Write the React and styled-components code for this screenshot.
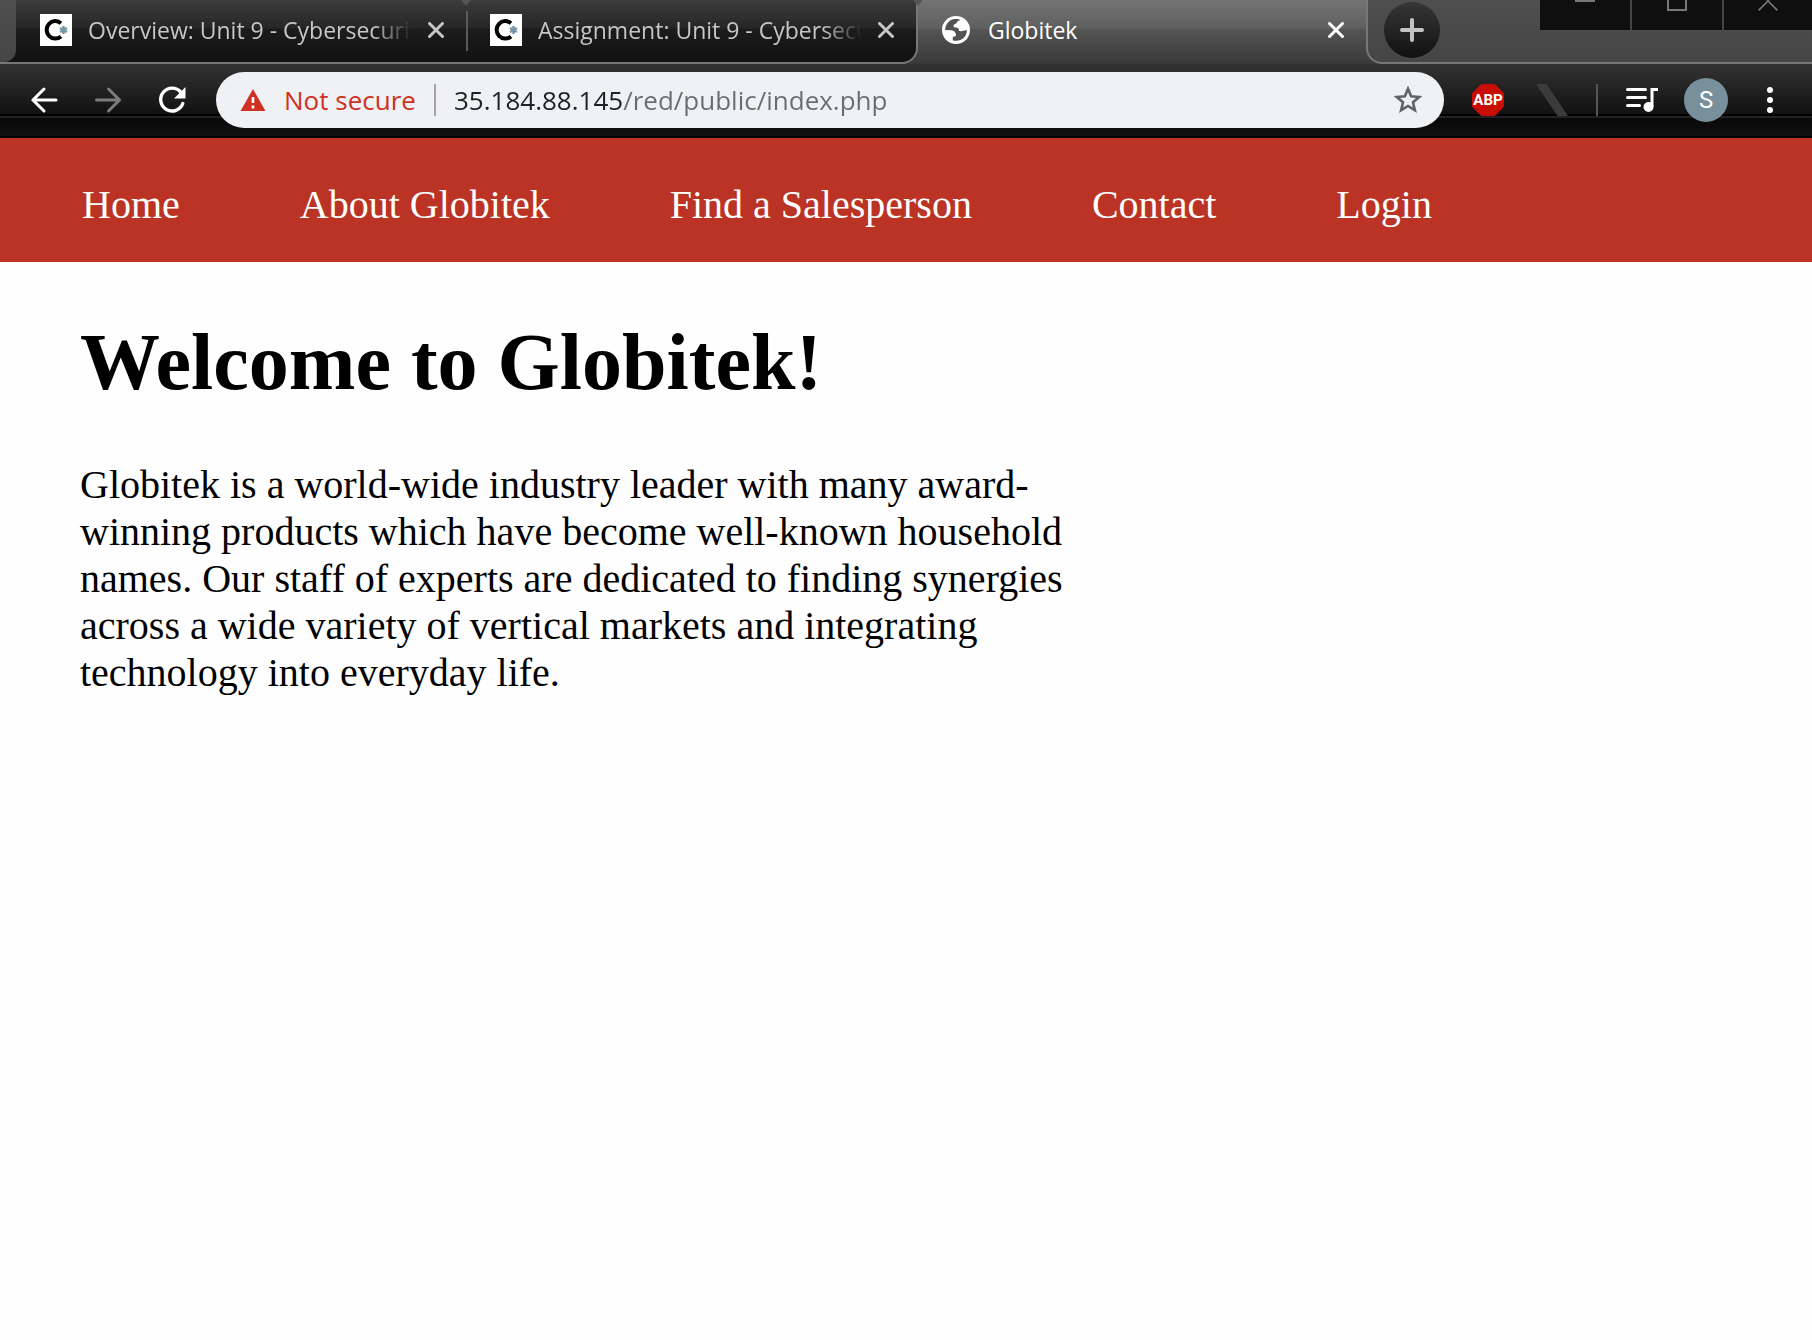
import React from "react";
import styled, { createGlobalStyle, css } from "styled-components";

const GlobalStyle = createGlobalStyle`
  *, *::before, *::after { box-sizing: border-box; }
  body { margin: 0; background: #fefefe; }
`;

const UI_FONT = `"Open Sans", "Noto Sans", sans-serif`;
const PAGE_FONT = `"Liberation Serif", "Times New Roman", serif`;
const LINE = "#777777";

const inactiveFill = "linear-gradient(#3c3c3c 0, #262626 28px, #1c1c1c 29px, #111111 62px)";
const frameFill = "linear-gradient(#4f4f4f, #454545)";

const IconButton = styled.button`
  display: flex;
  align-items: center;
  justify-content: center;
  flex: none;
  width: ${(p) => p.$size}px;
  height: ${(p) => p.$size}px;
  padding: 0;
  border: 0;
  background: none;
  color: ${(p) => p.$color || "#ffffff"};
`;

/* Tab strip */
const Strip = styled.div`
  display: flex;
  height: 64px;
  overflow: hidden;
  background: linear-gradient(#737373 0, #5e605f 28px, #545454 30px, #393939 64px);
  font-family: ${UI_FONT};
`;

const FrameEdge = styled.div`
  flex: none;
  width: 16px;
  background: ${frameFill};
  border-bottom-right-radius: 12px;
`;

const BackTabs = styled.div`
  display: flex;
  flex: 0 1 auto;
  min-width: 0;
  border: solid ${LINE};
  border-width: 0 2px 2px 0;
  border-bottom-right-radius: 16px;
  background: ${inactiveFill};
`;

const notch = css`
  &::before {
    content: "";
    position: absolute;
    top: 0;
    left: -5px;
    width: 10px;
    height: 6px;
    background: #555555;
    clip-path: polygon(0 0, 100% 0, 50% 100%);
  }
`;

const Tab = styled.div`
  position: relative;
  display: flex;
  align-items: center;
  flex: 0 1 450px;
  min-width: 0;
  height: 60px;
  padding: 0 18px 0 24px;
  color: ${(p) => (p.$active ? "#ffffff" : "#c4c7c5")};
  ${(p) => p.$notch && notch}
`;

const ActiveTab = styled(Tab)`
  flex-basis: 448px;
  padding-left: 22px;
`;

const TabDivider = styled.span`
  flex: none;
  align-self: center;
  width: 2px;
  height: 40px;
  margin-right: -2px;
  background: #5a5a5a;
`;

const TabTitle = styled.span`
  flex: 1;
  min-width: 0;
  margin: 0 12px 0 16px;
  overflow: hidden;
  white-space: nowrap;
  font-size: 23px;
  line-height: 32px;
  ${(p) => p.$fade && "mask-image: linear-gradient(to right, #000 calc(100% - 40px), transparent);"}
`;

const StripRest = styled.div`
  display: flex;
  flex: 1;
  align-items: flex-start;
  justify-content: space-between;
  border: solid ${LINE};
  border-width: 0 0 2px 2px;
  border-bottom-left-radius: 16px;
  background: ${frameFill};
`;

const NewTab = styled(IconButton)`
  margin: 2px 0 0 16px;
  border-radius: 50%;
  background: linear-gradient(#363636, #111111);
`;

const WindowControls = styled.div`
  display: flex;
  gap: 2px;
  height: 30px;
  background: #454545;
`;

const WindowButton = styled.button`
  display: flex;
  justify-content: center;
  align-items: flex-start;
  width: ${(p) => p.$width}px;
  padding: 0;
  border: 0;
  background: #0f0f0f;
  color: #777777;
`;

/* Toolbar */
const Toolbar = styled.div`
  display: flex;
  align-items: center;
  height: 74px;
  padding: 0 26px 0 28px;
  border-bottom: 2px solid #000000;
  background: linear-gradient(
    #333333 0, #111111 50px, #000000 50px, #000000 52px,
    #222222 52px, #222222 54px, #080808 54px, #111111 72px
  );
  font-family: ${UI_FONT};
`;

const NavButtons = styled.div`
  display: flex;
  gap: 32px;
  margin-right: 28px;
`;

const Omnibox = styled.form`
  display: flex;
  align-items: center;
  flex: 1;
  min-width: 0;
  height: 56px;
  margin: 0;
  padding: 0 20px 0 24px;
  border-radius: 28px;
  background: #f0f1f4;
`;

const Security = styled.button`
  display: flex;
  align-items: center;
  gap: 18px;
  flex: none;
  width: 194px;
  padding: 0;
  border: 0;
  background: none;
  color: #cf3222;
  font: 26px/36px ${UI_FONT};
  white-space: nowrap;
`;

const Divider = styled.span`
  flex: none;
  width: 2px;
  height: 32px;
  background: ${(p) => p.$color};
`;

const Address = styled.input`
  flex: 1;
  min-width: 0;
  height: 40px;
  padding: 0 0 0 18px;
  border: 0;
  outline: 0;
  color: #202124;
  font: 26px/40px ${UI_FONT};
  background: linear-gradient(to right, #202124 187px, #6a6d70 187px);
  background-clip: text;
  -webkit-text-fill-color: transparent;
`;

const Extensions = styled.div`
  display: flex;
  align-items: center;
  gap: 28px;
  margin-left: 28px;
`;

const Abp = styled(IconButton)`
  margin-right: 4px;
  background: #c70d04;
  clip-path: polygon(29% 0, 71% 0, 100% 29%, 100% 71%, 71% 100%, 29% 100%, 0 71%, 0 29%);
  font: bold 15px/32px Roboto, sans-serif;
`;

const Avatar = styled(IconButton)`
  margin: 0 -2px;
  border-radius: 50%;
  background: #78909c;
  font: 24px/44px Roboto, sans-serif;
`;

/* Web page */
const SiteNav = styled.nav`
  padding: 43px 82px 34px;
  background: #bb3324;
`;

const NavList = styled.ul`
  display: flex;
  flex-wrap: wrap;
  column-gap: 120px;
  margin: 0;
  padding: 0;
  list-style: none;
`;

const NavLink = styled.a`
  color: #ffffff;
  font: 40px/47px ${PAGE_FONT};
  text-decoration: none;
`;

const Main = styled.main`
  padding: 54px 80px;
  color: #000000;
  font-family: ${PAGE_FONT};
`;

const Heading = styled.h1`
  margin: 0 0 53px;
  font-size: 80px;
  line-height: 92px;
`;

const Intro = styled.p`
  max-width: 1000px;
  margin: 0;
  font-size: 40px;
  line-height: 47px;
`;

/* Icons */
const Svg = ({ size = 32, box = 32, children }) => (
  <svg width={size} height={size} viewBox={`0 0 ${box} ${box}`} fill="none" aria-hidden="true">
    {children}
  </svg>
);

const TabIcon = styled.span`
  display: flex;
  flex: none;
`;

const CourseIcon = () => (
  <Svg>
    <rect width="32" height="32" fill="#fff" />
    <path d="M21 9.2A8.7 8.7 0 1 0 21 22.4" stroke="#000" strokeWidth="4" />
    <path d="M23.5 12v8M20 14l7 4M20 18l7-4" stroke="#7594a3" strokeWidth="2.4" />
  </Svg>
);

const GlobeIcon = () => (
  <Svg>
    <circle cx="16" cy="16" r="14" fill="#fff" />
    <path
      d="M12.600 5.400C16 4.600 18.800 5.200 20.400 6C18.600 6.600 17.400 7 16.800 8.600C16 10.600 13.800 9.800 13.600 11.800C13.500 13.200 14.200 13.600 15.400 13.600C18.600 13.400 18.800 15.200 19 17C20.400 17.400 22.600 17 24.800 16.400L26.800 16C27 20.500 24.500 24 21.400 25.600C18.400 27.200 15 26.800 12.800 26.400L12.800 23.600C13 22.600 13.600 22.400 14.600 22.400C16 22.400 16.200 21.600 16 20.600C15.600 18 13.800 16.400 11.600 16.200L5.200 16C5 11.500 8.200 6.600 12.600 5.400Z"
      fill="#515251"
    />
  </Svg>
);

const CloseIcon = () => (
  <Svg size={16} box={16}>
    <path d="M1.500 1.500l13 13M14.500 1.500l-13 13" stroke="currentColor" strokeWidth="3" strokeLinecap="round" />
  </Svg>
);

const ArrowIcon = ({ forward }) => (
  <Svg>
    <path
      d={forward ? "M4.500 16h23M16.500 5l11 11-11 11" : "M28 16h-23M16 5l-11 11 11 11"}
      stroke="currentColor"
      strokeWidth="3"
      strokeLinecap="round"
    />
  </Svg>
);

const ReloadIcon = () => (
  <Svg>
    <path d="M24.800 8.200A11.400 11.400 0 1 0 26.800 19.500" stroke="currentColor" strokeWidth="3.400" strokeLinecap="round" />
    <path d="M29.500 3v11.500H18z" fill="currentColor" />
  </Svg>
);

const WarningIcon = () => (
  <Svg size={26} box={26}>
    <path d="M13 2L25.500 24H.5z" fill="currentColor" />
    <path d="M13 10v6M13 18.500v3" stroke="#fff" strokeWidth="2.600" />
  </Svg>
);

const StarIcon = () => (
  <Svg>
    <path
      d="M16 4.800l3.100 7.500 8.100.7-6.200 5.300 1.900 7.900-6.900-4.200-6.900 4.200 1.900-7.900L4.800 13l8.100-.7z"
      stroke="#5f6368"
      strokeWidth="2.600"
    />
  </Svg>
);

const tabs = ["Overview: Unit 9 - Cybersecurity", "Assignment: Unit 9 - Cybersecurity"];
const links = ["Home", "About Globitek", "Find a Salesperson", "Contact", "Login"];

export default function App() {
  return (
    <>
      <GlobalStyle />
      <header>
        <Strip>
          <BackTabs>
            <FrameEdge />
            {tabs.map((title, i) => (
              <React.Fragment key={title}>
                {i > 0 && <TabDivider />}
                <Tab $notch={i > 0}>
                  <TabIcon><CourseIcon /></TabIcon>
                  <TabTitle $fade>{title}</TabTitle>
                  <IconButton $size={24} $color="#c4c7c5" aria-label="Close tab">
                    <CloseIcon />
                  </IconButton>
                </Tab>
              </React.Fragment>
            ))}
          </BackTabs>
          <ActiveTab $active $notch>
            <TabIcon><GlobeIcon /></TabIcon>
            <TabTitle>Globitek</TabTitle>
            <IconButton $size={24} aria-label="Close tab">
              <CloseIcon />
            </IconButton>
          </ActiveTab>
          <StripRest>
            <NewTab $size={56} $color="#c4c4c4" aria-label="New tab">
              <Svg size={24} box={24}>
                <path d="M12 2v20M2 12h20" stroke="currentColor" strokeWidth="4" strokeLinecap="round" />
              </Svg>
            </NewTab>
            <WindowControls>
              <WindowButton $width={90} aria-label="Minimize">
                <Svg size={20} box={20}><path d="M0 1h20" stroke="currentColor" strokeWidth="2" /></Svg>
              </WindowButton>
              <WindowButton $width={90} aria-label="Maximize">
                <Svg size={20} box={20}><path d="M1 0v10h18V0" stroke="currentColor" strokeWidth="2" /></Svg>
              </WindowButton>
              <WindowButton $width={88} aria-label="Close window">
                <Svg size={20} box={20}><path d="M.5 10.500L10 1l9.500 9.500M9 0l2 2M11 0L9 2" stroke="currentColor" strokeWidth="1.600" /></Svg>
              </WindowButton>
            </WindowControls>
          </StripRest>
        </Strip>

        <Toolbar>
          <NavButtons>
            <IconButton $size={32} aria-label="Back"><ArrowIcon /></IconButton>
            <IconButton $size={32} $color="#7a7d80" aria-label="Forward"><ArrowIcon forward /></IconButton>
            <IconButton $size={32} aria-label="Reload"><ReloadIcon /></IconButton>
          </NavButtons>
          <Omnibox>
            <Security type="button">
              <WarningIcon />
              Not secure
            </Security>
            <Divider $color="#a6a4a2" />
            <Address aria-label="Address" defaultValue="35.184.88.145/red/public/index.php" spellCheck={false} />
            <IconButton type="button" $size={32} aria-label="Bookmark this page"><StarIcon /></IconButton>
          </Omnibox>
          <Extensions>
            <Abp $size={32}>ABP</Abp>
            <IconButton $size={32} aria-label="Extension">
              <Svg><path d="M0 0h10.500L32 32H21.500z" fill="#3b3b3b" /></Svg>
            </IconButton>
            <Divider $color="#555555" />
            <IconButton $size={32} aria-label="Media controls">
              <Svg>
                <path d="M1.500 5.500h18M1.500 13.500h18M1.500 21.500h12" stroke="#fff" strokeWidth="3" strokeLinecap="round" />
                <path d="M26 23V5.500h6" stroke="#fff" strokeWidth="3" />
                <circle cx="22.500" cy="23" r="5" fill="#fff" />
              </Svg>
            </IconButton>
            <Avatar $size={44}>S</Avatar>
            <IconButton $size={32} aria-label="Menu">
              <Svg>
                <g fill="#fff">
                  <circle cx="16" cy="6" r="3" />
                  <circle cx="16" cy="16" r="3" />
                  <circle cx="16" cy="26" r="3" />
                </g>
              </Svg>
            </IconButton>
          </Extensions>
        </Toolbar>
      </header>

      <SiteNav>
        <NavList>
          {links.map((label) => (
            <li key={label}>
              <NavLink href="#">{label}</NavLink>
            </li>
          ))}
        </NavList>
      </SiteNav>

      <Main>
        <Heading>Welcome to Globitek!</Heading>
        <Intro>
          Globitek is a world-wide industry leader with many award-winning products which have become well-known
          household names. Our staff of experts are dedicated to finding synergies across a wide variety of vertical
          markets and integrating technology into everyday life.
        </Intro>
      </Main>
    </>
  );
}
